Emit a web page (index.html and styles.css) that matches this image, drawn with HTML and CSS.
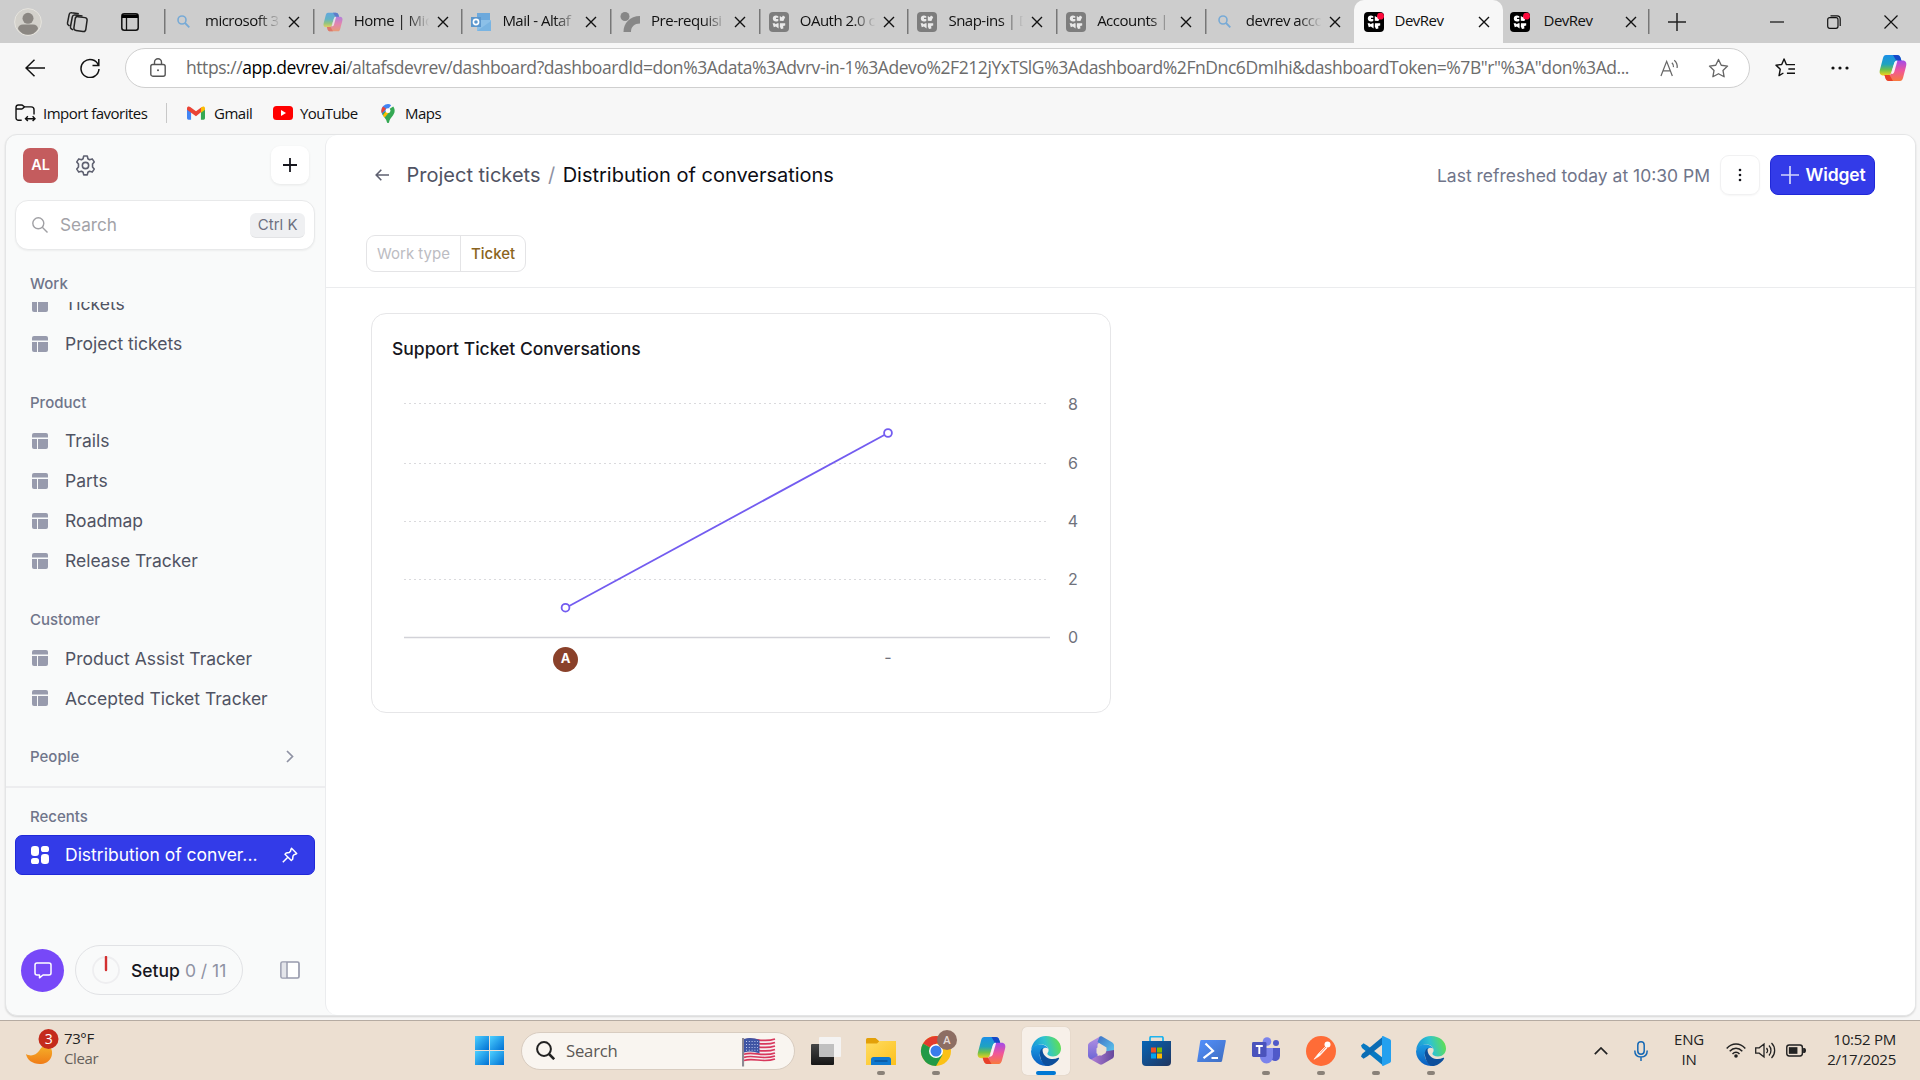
FILE: index.html
```html
<!DOCTYPE html>
<html lang="en">
<head>
<meta charset="utf-8">
<title>DevRev</title>
<link rel="stylesheet" href="styles.css">
</head>
<body>
<svg class="defs" width="0" height="0" aria-hidden="true">
  <defs>
    <linearGradient id="gCopA" x1="0" y1="0" x2="0" y2="1"><stop offset="0" stop-color="#1b8fe8"/><stop offset=".45" stop-color="#1fa3c0"/><stop offset=".72" stop-color="#6ec04a"/><stop offset="1" stop-color="#f5d21c"/></linearGradient>
    <linearGradient id="gCopB" x1="0" y1="0" x2="0" y2="1"><stop offset="0" stop-color="#a24bea"/><stop offset=".5" stop-color="#f0569a"/><stop offset="1" stop-color="#f87b3e"/></linearGradient>
    <linearGradient id="gEdgeA" x1="0" y1=".6" x2="1" y2=".4"><stop offset="0" stop-color="#1690d8"/><stop offset=".5" stop-color="#2fc3d0"/><stop offset="1" stop-color="#62e04e"/></linearGradient>
    <linearGradient id="gEdgeB" x1="0" y1="0" x2="0" y2="1"><stop offset="0" stop-color="#1b9de2"/><stop offset="1" stop-color="#0a5cc0"/></linearGradient>
    <linearGradient id="gWin" x1="0" y1="0" x2="1" y2="1"><stop offset="0" stop-color="#4cd0ff"/><stop offset="1" stop-color="#0070d4"/></linearGradient>
    <linearGradient id="gMoon" x1="0" y1="0" x2="0" y2="1"><stop offset="0" stop-color="#f5b52b"/><stop offset="1" stop-color="#f07c17"/></linearGradient>
    <linearGradient id="gFolder" x1="0" y1="0" x2="1" y2="1"><stop offset="0" stop-color="#ffdc63"/><stop offset="1" stop-color="#fcc11c"/></linearGradient>
    <linearGradient id="gStore" x1="0" y1="0" x2="1" y2="1"><stop offset="0" stop-color="#0765b6"/><stop offset="1" stop-color="#20355f"/></linearGradient>
    <linearGradient id="gPs" x1="0" y1="0" x2="1" y2="1"><stop offset="0" stop-color="#5391fe"/><stop offset="1" stop-color="#3e6dbf"/></linearGradient>
    <linearGradient id="gDark" x1="0" y1="0" x2="0" y2="1"><stop offset="0" stop-color="#454545"/><stop offset="1" stop-color="#161616"/></linearGradient>
    <linearGradient id="gOffA" x1="0" y1="0" x2="0" y2="1"><stop offset="0" stop-color="#b590e2"/><stop offset="1" stop-color="#6d66d6"/></linearGradient>
    <linearGradient id="gOffB" x1="0" y1="0" x2="1" y2="1"><stop offset="0" stop-color="#3f6fc4"/><stop offset="1" stop-color="#5fd0f2"/></linearGradient>
    <linearGradient id="gOffC" x1="0" y1="0" x2="1" y2="0"><stop offset="0" stop-color="#b07fd6"/><stop offset="1" stop-color="#66489c"/></linearGradient>
    <symbol id="close" viewBox="0 0 12 12"><path d="M1 1l10 10M11 1L1 11" stroke="#111" stroke-width="1.4" fill="none"/></symbol>
    <symbol id="lens" viewBox="0 0 13 13"><circle cx="5" cy="5" r="4" fill="none" stroke="#77aad6" stroke-width="1.6"/><path d="M8 8l4.3 4.3" stroke="#77aad6" stroke-width="1.8"/></symbol>
    <symbol id="copilot" viewBox="0 0 28 28">
      <path d="M7 1h11c2 0 3 1 3.600 3l.9 3h-4c-2 0-3 1-3.600 3l-2.700 8.500c-.6 2-1.600 3-3.600 3H4.500C1 21.500 0 19 1 15.500L4 4c.6-2 1.400-3 3-3z" fill="url(#gCopA)"/>
      <path d="M14 1h4c2 0 3 1 3.600 3l.9 3h-5z" fill="#1648c8"/>
      <path d="M21 27H10c-2 0-3-1-3.600-3L5.500 21h4c2 0 3-1 3.600-3l2.700-8.500c.6-2 1.600-3 3.600-3h4.100C27 6.500 28 9 27 12.500L24 24c-.6 2-1.400 3-3 3z" fill="url(#gCopB)"/>
      <path d="M14 27h-4c-2 0-3-1-3.600-3l-.9-3h5z" fill="#e8402a"/>
      <path d="M15.500 8.500c.5-1.500 1.500-2 3-2l-3.200 11.200c-.5 1.700-1.300 2.300-3 2.300z" fill="#fff" opacity=".9"/>
    </symbol>
    <symbol id="docs" viewBox="0 0 20 20"><rect width="20" height="20" rx="4" fill="#7d7d7d"/><g fill="#e9e9e9"><path d="M9.300 4.200C6.500 2.600 3.800 4 3.800 6.600s2.600 3.600 5.500 2.400V7H7V5.800h2.300z"/><path d="M10.800 4l2 1.300L14 3.500l2.200 1.600-1.800 4-3.600-.4z"/><path d="M3.600 11.200h2l1.200 1 1.400-1h1.400v5.200l-2.800-2-2 .8z"/><path d="M11 11.200h5.200v2.400l-2 .5.200 2.400L12 17l-1.200-2.600z"/></g></symbol>
    <symbol id="devrev" viewBox="0 0 20 20"><rect width="20" height="20" rx="4" fill="#000"/><g fill="#fff"><path d="M9.300 4.200C6.500 2.600 3.800 4 3.800 6.600s2.600 3.600 5.500 2.400V7H7V5.800h2.300z"/><path d="M10.800 4l2 1.300L14 3.500l2.200 1.600-1.800 4-3.600-.4z"/><path d="M3.600 11.200h2l1.200 1 1.400-1h1.400v5.200l-2.800-2-2 .8z"/><path d="M11 11.200h5.200v2.400l-2 .5.200 2.400L12 17l-1.200-2.600z"/></g><circle cx="16.500" cy="4.200" r="3.400" fill="#ff0a3c"/></symbol>
    <symbol id="layout" viewBox="0 0 16 16"><g fill="#989bad"><path d="M2 0h12a2 2 0 0 1 2 2v2.600H0V2a2 2 0 0 1 2-2z"/><path d="M0 6h5v10H2a2 2 0 0 1-2-2z"/><path d="M6 6h10v8a2 2 0 0 1-2 2H6z"/></g></symbol>
    <symbol id="edge" viewBox="0 0 30 30">
      <path d="M.2 14C1 6 7.200 0 15 0c8.500 0 15 5.500 15 12.400 0 4.800-3.600 8-8 8-3.600 0-5.600-1.300-5.600-2.700 0-1 1.200-1.300 1.200-3.600 0-3-3-5.600-7.200-5.600C5.400 8.500 1.300 11 .2 14z" fill="url(#gEdgeA)"/>
      <path d="M0 15.500C.7 10.500 5 8 10.400 8.500c3.500.3 6 2 6.900 4.300-1-1-2.500-1.400-4-.9-3.600 1.300-5 5-4.400 8.700.8 4.400 4.400 8 9.100 9A15 15 0 0 1 0 15.500z" fill="url(#gEdgeB)"/>
      <path d="M8.900 19c-.5-3.400.8-5.800 3-6.900-1 3.600.7 7.400 4 9.400 3.300 2 7.800 2 11.300.3.700-.3 1.200.3.800.9C25.300 27.300 20.500 30 16.500 30c-4-.7-7-5.500-7.600-11z" fill="#0d4f9c"/>
    </symbol>
  </defs>
</svg>

<header class="tabstrip">
  <div class="strip-tools">
    <svg class="i-profile" viewBox="0 0 28 28"><circle cx="14" cy="14" r="13.400" fill="#d3d1cb" stroke="#e6e4de"/><circle cx="14" cy="10.300" r="5.500" fill="#8b8782"/><path d="M4 21c0-3 2-4.500 5-4.500h10c3 0 5 1.500 5 4.500-2.500 4-6 5.800-10 5.800S6.500 25 4 21z" fill="#8b8782"/></svg>
    <svg class="i-ws" viewBox="0 0 22 22" fill="none" stroke="#222" stroke-width="1.500"><rect x="8.500" y="6" width="12" height="14" rx="2.500" transform="rotate(8 14 13)"/><path d="M7 19l-1.500-1c-1-.6-1.300-1.300-1-2.500L6.300 6c.3-1.600 1.300-2.200 2.700-2l7.500 1M3.500 15l-1-.8c-.9-.7-1.200-1.400-1-2.400l1.600-8c.3-1.600 1.200-2.400 2.700-2.100l7 1.100"/></svg>
    <svg class="i-vt" viewBox="0 0 18 18"><rect x=".8" y=".8" width="16.400" height="16.400" rx="2.500" fill="none" stroke="#111" stroke-width="1.500"/><path d="M1 1.500h16V5H1z" fill="#000"/><path d="M5.500 5v12" stroke="#111" stroke-width="1.300"/></svg>
  </div>
  <div class="tab"><svg class="fav lensfav"><use href="#lens"/></svg><span class="tt">microsoft 3</span><svg class="x"><use href="#close"/></svg></div>
  <div class="tab"><svg class="fav dim"><use href="#copilot"/></svg><span class="tt">Home | Mic</span><svg class="x"><use href="#close"/></svg></div>
  <div class="tab"><svg class="fav" viewBox="0 0 20 20"><path d="M6 1h13v9H6z" fill="#6da9dc"/><path d="M6 8h14v11H6z" fill="#8cc0e8"/><path d="M6 19l14-10v10z" fill="#79b4e2"/><rect y="5" width="10" height="10" fill="#5c97cd"/><circle cx="5" cy="10" r="2.600" fill="none" stroke="#fff" stroke-width="1.600"/></svg><span class="tt">Mail - Altaf</span><svg class="x"><use href="#close"/></svg></div>
  <div class="tab"><svg class="fav" viewBox="0 0 20 20" fill="#878787"><circle cx="5" cy="4.500" r="4.500"/><path d="M3.500 20C3.500 11 10 4 20 4v7.500C14.500 11.500 11 14.500 11 20z"/></svg><span class="tt">Pre-requisi</span><svg class="x"><use href="#close"/></svg></div>
  <div class="tab"><svg class="fav"><use href="#docs"/></svg><span class="tt">OAuth 2.0 c</span><svg class="x"><use href="#close"/></svg></div>
  <div class="tab"><svg class="fav"><use href="#docs"/></svg><span class="tt">Snap-ins | D</span><svg class="x"><use href="#close"/></svg></div>
  <div class="tab"><svg class="fav"><use href="#docs"/></svg><span class="tt">Accounts | </span><svg class="x"><use href="#close"/></svg></div>
  <div class="tab"><svg class="fav lensfav"><use href="#lens"/></svg><span class="tt">devrev acco</span><svg class="x"><use href="#close"/></svg></div>
  <div class="tab active"><svg class="fav"><use href="#devrev"/></svg><span class="tt full">DevRev</span><svg class="x"><use href="#close"/></svg></div>
  <div class="tab after"><svg class="fav"><use href="#devrev"/></svg><span class="tt full">DevRev</span><svg class="x"><use href="#close"/></svg></div>
  <div class="newtab"><svg width="18" height="18" viewBox="0 0 18 18"><path d="M9 0v18M0 9h18" stroke="#222" stroke-width="1.500"/></svg></div>
  <div class="winctl">
    <svg width="14" height="14" viewBox="0 0 14 14"><path d="M0 7h14" stroke="#111" stroke-width="1.200"/></svg>
    <svg width="14" height="14" viewBox="0 0 14 14" fill="none" stroke="#111" stroke-width="1.200"><rect x=".7" y="2.700" width="10.300" height="10.600" rx="2"/><path d="M3.500.8h6.500a3.200 3.200 0 0 1 3.200 3.200v7"/></svg>
    <svg width="14" height="14" viewBox="0 0 14 14"><path d="M.5.5l13 13M13.500.5l-13 13" stroke="#111" stroke-width="1.200"/></svg>
  </div>
</header>

<div class="navbar">
  <svg class="i-back" viewBox="0 0 20 18" fill="none" stroke="#111" stroke-width="1.500"><path d="M20 9H1M9.500.8L1 9l8.500 8.200"/></svg>
  <svg class="i-reload" viewBox="0 0 20 20" fill="none" stroke="#111" stroke-width="1.500"><path d="M18.500 7.500A9 9 0 1 0 19 11M18.800 1v6.500h-6.300"/></svg>
  <div class="address">
    <svg class="i-lock" viewBox="0 0 16 19" fill="none" stroke="#555" stroke-width="1.400"><rect x=".8" y="6.500" width="14.400" height="11.700" rx="2"/><path d="M4.500 6.500V4.200a3.500 3.500 0 0 1 7 0v2.300"/><circle cx="8" cy="12.300" r="1" fill="#555" stroke="none"/></svg>
    <div class="url">https://<b>app.devrev.ai</b>/altafsdevrev/dashboard?dashboardId=don%3Adata%3Advrv-in-1%3Adevo%2F212jYxTSlG%3Adashboard%2FnDnc6DmIhi&amp;dashboardToken=%7B"r"%3A"don%3Ad...</div>
    <svg class="i-read" viewBox="0 0 20 18" fill="none" stroke="#666" stroke-width="1.300"><path d="M1 17.500L7 2l6 15.500M3.200 12h7.600M12.500 3.500a5 5 0 0 1 1.700 4.500M15 .8a9 9 0 0 1 3 8.200"/></svg>
    <svg class="i-star" viewBox="0 0 22 21" fill="none" stroke="#666" stroke-width="1.400" stroke-linejoin="round"><path d="M11 1.500l2.900 6.100 6.600.9-4.800 4.600 1.200 6.600L11 16.500l-5.900 3.200 1.200-6.600L1.500 8.500l6.600-.9z"/></svg>
  </div>
  <svg class="i-favs" viewBox="0 0 22 20" fill="none" stroke="#111" stroke-width="1.500" stroke-linejoin="round"><path d="M13.500 7H12L9.500 1 7 6.800l-6 .7 4.500 4.300-1.300 6.700 4.600-2.700M13.500 7H21M14 11.500h7M12.500 16H21"/></svg>
  <svg class="i-dots" viewBox="0 0 18 4" fill="#111"><circle cx="2" cy="2" r="1.600"/><circle cx="9" cy="2" r="1.600"/><circle cx="16" cy="2" r="1.600"/></svg>
  <svg class="i-cop"><use href="#copilot"/></svg>
</div>

<div class="bookmarks">
  <svg class="i-import" viewBox="0 0 22 19" fill="none" stroke="#111" stroke-width="1.500"><path d="M7 17.200H3.500a2.500 2.500 0 0 1-2.500-2.500V3.500C1 1.800 2 1 3.300 1h3.500C8.500 1 9 3 10.500 3H17a3 3 0 0 1 3 3v5M1 5.200h6c1.700 0 2-2.200 3.500-2.200M11 15.500h10M13.500 13L11 15.500l2.500 2.500M18.500 13l2.500 2.500-2.500 2.500"/></svg>
  <span class="bm b1">Import favorites</span>
  <i class="bmsep"></i>
  <svg class="i-gmail" viewBox="0 0 19 14"><path d="M0 2v10.500A1.500 1.500 0 0 0 1.500 14H4.300V6z" fill="#4285f4"/><path d="M19 2v10.500a1.500 1.500 0 0 1-1.500 1.500h-2.800V6z" fill="#34a853"/><path d="M0 2.200C0 .2 2 -.4 3.400.7L9.500 5.200 15.600.7 14.700 6.200 9.500 10.300 0 3.500z" fill="#ea4335"/><path d="M14.700 1.400l.9-.7C17-.4 19 .2 19 2.200v1.500l-4.300 3z" fill="#fbbc04"/></svg>
  <span class="bm b2">Gmail</span>
  <svg class="i-yt" viewBox="0 0 20 14"><rect width="20" height="14" rx="3.500" fill="#f00"/><path d="M8 4l5 3-5 3z" fill="#fff"/></svg>
  <span class="bm b3">YouTube</span>
  <svg class="i-maps" viewBox="0 0 14 20"><path d="M7 0a7 7 0 0 0-7 7c0 2 .8 3.500 1.800 5l8.500-10.800A7 7 0 0 0 7 0z" fill="#4285f4"/><path d="M1.700 2.500A7 7 0 0 0 0 7c0 1 .2 2 .6 2.800L5 5z" fill="#ea4335"/><path d="M1 10l11.500-7.300c1 1.300 1.500 2.600 1.500 4.300 0 5-5 7-5.800 12-.3 1.400-2 1.400-2.400 0C5.300 16 3 14 1.600 11.800z" fill="#34a853"/><path d="M1.600 11.800L5 7.500l3.500 1-5 5.800C2.800 13.500 2 12.600 1.600 11.800z" fill="#fbbc04"/><circle cx="7" cy="7" r="2.600" fill="#fff"/></svg>
  <span class="bm b4">Maps</span>
</div>

<main class="app">
  <aside class="sidebar">
    <div class="side-top">
      <div class="avatar">AL</div>
      <svg class="i-gear" viewBox="0 0 20 20" fill="none" stroke="#5e6070" stroke-width="1.500" stroke-linejoin="round"><path d="M8.300 1h3.400l.6 2.600 1.500.9 2.600-.8 1.900 2.900-1.600 2v2.800l1.600 2-1.900 2.900-2.600-.8-1.500.9-.6 2.500H8.300l-.6-2.500-1.500-.9-2.600.8-1.900-2.900 1.600-2V8.600l-1.600-2 1.900-2.900 2.600.8 1.500-.9z"/><circle cx="10" cy="10" r="3"/></svg>
      <div class="addbtn"><svg width="14" height="14" viewBox="0 0 14 14"><path d="M7 0v14M0 7h14" stroke="#16161d" stroke-width="1.800"/></svg></div>
    </div>
    <div class="searchbox">
      <svg width="16" height="16" viewBox="0 0 16 16" fill="none" stroke="#a0a0a4" stroke-width="1.400"><circle cx="6.300" cy="6.300" r="5.500"/><path d="M10.300 10.300l5.200 5.200"/></svg>
      <span class="ph">Search</span><kbd>Ctrl K</kbd>
    </div>
    <div class="label first">Work</div>
    <div class="clip"><div class="row"><svg><use href="#layout"/></svg>Tickets</div></div>
    <div class="row"><svg><use href="#layout"/></svg>Project tickets</div>
    <div class="label">Product</div>
    <div class="row"><svg><use href="#layout"/></svg>Trails</div>
    <div class="row"><svg><use href="#layout"/></svg>Parts</div>
    <div class="row"><svg><use href="#layout"/></svg>Roadmap</div>
    <div class="row"><svg><use href="#layout"/></svg>Release Tracker</div>
    <div class="label">Customer</div>
    <div class="row"><svg><use href="#layout"/></svg>Product Assist Tracker</div>
    <div class="row"><svg><use href="#layout"/></svg>Accepted Ticket Tracker</div>
    <div class="label people">People<svg width="8" height="13" viewBox="0 0 8 13"><path d="M1 1l5.500 5.500L1 12" fill="none" stroke="#8f92a3" stroke-width="1.700"/></svg></div>
    <hr>
    <div class="label recents">Recents</div>
    <div class="row current">
      <svg viewBox="0 0 18 18" fill="#fff"><rect width="8" height="10" rx="3.200"/><rect x="10" width="8" height="6" rx="2.600"/><rect y="12" width="8" height="6" rx="2.600"/><rect x="10" y="8" width="8" height="10" rx="3.200"/></svg>
      <span>Distribution of conver...</span>
      <svg class="pin" viewBox="0 0 16 16" fill="none" stroke="#fff" stroke-width="1.500" stroke-linejoin="round"><path d="M9.500 1.300l5.200 5.200-1.400.8-1 .3-1.300 1.500-.4 3.200-1.300 1.200L3 7.200 4.200 6l3.100-.5 1.300-1.400.2-1.200zM5.800 10.200L.8 15.200"/></svg>
    </div>
    <div class="side-foot">
      <div class="chat"><svg width="18" height="17" viewBox="0 0 18 17" fill="none" stroke="#fff" stroke-width="1.500" stroke-linejoin="round"><path d="M3 1h12a2 2 0 0 1 2 2v8a2 2 0 0 1-2 2H9l-3.500 2.800V13H3a2 2 0 0 1-2-2V3a2 2 0 0 1 2-2z"/></svg></div>
      <div class="setup"><svg width="28" height="28" viewBox="0 0 28 28"><circle cx="14" cy="14" r="13" fill="none" stroke="#eeeef0" stroke-width="1.800"/><path d="M14 1v13" stroke="#d32f2f" stroke-width="2.400" stroke-linecap="round"/></svg><span>Setup</span><em>0 / 11</em></div>
      <svg class="i-panel" viewBox="0 0 20 18"><rect x="1" y="1" width="18" height="16" rx="1.500" fill="#fff" stroke="#989bad" stroke-width="1.700"/><path d="M1.700 1.700h5v14.600h-5z" fill="#e4e5ea"/><path d="M7 1v16" stroke="#989bad" stroke-width="1.500"/></svg>
    </div>
  </aside>

  <section class="content">
    <div class="head">
      <div class="crumbs">
        <svg width="14" height="12" viewBox="0 0 14 12" fill="none" stroke="#5e6070" stroke-width="1.600"><path d="M14 6H1.200M6.300.8L1.200 6l5.100 5.200"/></svg>
        <span class="parent">Project tickets</span><span class="slash">/</span><span class="here">Distribution of conversations</span>
        <span class="refreshed">Last refreshed today at 10:30 PM</span>
        <div class="more"><svg width="4" height="14" viewBox="0 0 4 14" fill="#16161d"><circle cx="2" cy="2" r="1.300"/><circle cx="2" cy="7" r="1.300"/><circle cx="2" cy="12" r="1.300"/></svg></div>
        <div class="widget"><svg width="18" height="18" viewBox="0 0 18 18"><path d="M9 0v18M0 9h18" stroke="#d4d6fb" stroke-width="1.700"/></svg><span>Widget</span></div>
      </div>
      <div class="filter"><span>Work type</span><b>Ticket</b></div>
    </div>
    <div class="card">
      <h2>Support Ticket Conversations</h2>
      <svg class="chart" width="700" height="300" viewBox="0 0 700 300">
        <g stroke="#dadadd" stroke-width="1.200" stroke-dasharray="2 3"><path d="M12 22.500h644M12 82.500h644M12 140.500h644M12 198.500h644"/></g>
        <path d="M12 256.500h646" stroke="#d2d2d8" stroke-width="1.600"/>
        <path d="M173.500 227L496 52" stroke="#735cf0" stroke-width="1.800"/>
        <circle cx="173.500" cy="226.700" r="3.900" fill="#fff" stroke="#735cf0" stroke-width="1.800"/>
        <circle cx="496" cy="52" r="3.900" fill="#fff" stroke="#735cf0" stroke-width="1.800"/>
        <g class="ax" text-anchor="middle"><text x="681" y="28.500">8</text><text x="681" y="87.500">6</text><text x="681" y="145.500">4</text><text x="681" y="203.500">2</text><text x="681" y="261.500">0</text><text x="496" y="282">-</text></g>
        <circle cx="173.500" cy="278.500" r="12.500" fill="#8a412a"/>
        <text class="badge" x="173.500" y="282" text-anchor="middle">A</text>
      </svg>
    </div>
  </section>
</main>

<footer class="taskbar">
  <div class="weather">
    <svg width="36" height="38" viewBox="0 0 36 38"><path d="M2 27c5 3 10 1 13-3 2-3 4-6 8-7 8 4 7 19-6 20C9 37.500 3 33 2 27z" fill="url(#gMoon)"/><circle cx="24.500" cy="12" r="10" fill="#c42b1c"/><text class="wb" x="24.500" y="17" text-anchor="middle">3</text></svg>
    <div><span>73°F</span><span class="clear">Clear</span></div>
  </div>
  <div class="apps">
    <svg class="start" viewBox="0 0 29 29" fill="url(#gWin)"><rect width="14" height="14"/><rect x="15" width="14" height="14"/><rect y="15" width="14" height="14"/><rect x="15" y="15" width="14" height="14"/></svg>
    <div class="tsearch">
      <svg width="19" height="19" viewBox="0 0 19 19" fill="none" stroke="#222"><circle cx="8" cy="8" r="6.900" stroke-width="2"/><path d="M12.500 12.500l5.700 5.700" stroke-width="2.600"/></svg>
      <span>Search</span>
      <svg class="flag" viewBox="0 0 34 30"><path d="M1 1v28.500" stroke="#8d8a93" stroke-width="2.200"/><path d="M2 2.500C12-1 20 6 33 1.500v21C20 27 12 20 2 24z" fill="#f6eef0"/><g fill="none" stroke="#d8385c" stroke-width="1.700"><path d="M2 3.200C12-.3 20 6.500 33 2M2 6.700C12 3.200 20 10 33 5.500M2 10.200C12 6.700 20 13.500 33 9M2 13.700C12 10.200 20 17 33 12.500M2 17.200C12 13.700 20 20.500 33 16M2 20.400C12 17 20 23.500 33 19M2 23.500C12 20 20 26.500 33 22"/></g><path d="M2 2c6-2 11-.5 15.500 1v13.300c-5-1.600-10-2.800-15.500-.8z" fill="#3f55a4"/><path d="M4 4.500h12M4 7.500h12M4 10.500h12M4 13.200h12" stroke="#c4cdec" stroke-width="1" stroke-dasharray="1 1.800"/></svg>
    </div>
    <div class="app-i"><svg width="30" height="28" viewBox="0 0 30 28"><rect y="7" width="23" height="21" rx="1" fill="url(#gDark)"/><rect x="8" width="22" height="20" rx="1" fill="#f4f4f4" opacity=".93"/><path d="M8 7h15v13H8z" fill="#aaa" opacity=".65"/></svg></div>
    <div class="app-i run"><svg width="30" height="28" viewBox="0 0 30 28"><path d="M0 2.500A1.500 1.500 0 0 1 1.500 1h8L13 4v4H0z" fill="#e3a008"/><path d="M0 6.500L11 6.400 13.500 4H30v24H0z" fill="url(#gFolder)"/><path d="M5 28v-5.500a2.500 2.500 0 0 1 2.500-2.500h15a2.500 2.500 0 0 1 2.500 2.500V28z" fill="#0f78cf"/><path d="M8.500 24h13" stroke="#0a4f94" stroke-width="1.300"/></svg></div>
    <div class="app-i run"><svg width="42" height="42" viewBox="-1 -2 42 42"><circle cx="20" cy="19" r="15" fill="#fbc116"/><path d="M20 19L7 11.500A15 15 0 0 1 33 11.500H20z" fill="#e33b2e"/><path d="M7 11.500a15 15 0 0 0 13 22.500l6.500-11.300L20 19z" fill="#229a47"/><circle cx="20" cy="19" r="7" fill="#fff"/><circle cx="20" cy="19" r="5.500" fill="#3a7cec"/><circle cx="31" cy="8" r="10" fill="#8d6e63"/><text class="cb" x="31" y="12" text-anchor="middle">A</text></svg></div>
    <div class="app-i"><svg width="29" height="29"><use href="#copilot"/></svg></div>
    <div class="app-i on"><svg width="30" height="30"><use href="#edge"/></svg></div>
    <div class="app-i"><svg width="26" height="29" viewBox="0 0 26 29"><path d="M0 9.500C0 8 .7 7 2 6.200L11.500.7 15 2.500 9.500 8.500v12L4.500 23.500C1.500 23.500 0 21.500 0 19.500z" fill="url(#gOffA)"/><path d="M11.500.7c1-.6 2-.6 3 0L24 6.200c1.300.8 2 1.800 2 3.300V20l-7.500-3.500v-5L9.500 6z" fill="url(#gOffB)"/><path d="M3 23.600l6.500-3.800h1.500l7.500-4.500L26 14v5.500c0 1.500-.7 2.600-2 3.300l-9.500 5.500c-1 .6-2 .6-3 0z" fill="url(#gOffC)"/><path d="M13 9.500l4.800 2.700v4.800L13 19.800l-4.500-2.500v-5z" fill="#eddfd0"/></svg></div>
    <div class="app-i"><svg width="29" height="30" viewBox="0 0 29 30"><path d="M8 6V2a1.300 1.300 0 0 1 1.300-1.300h10.400A1.300 1.300 0 0 1 21 2v4" fill="none" stroke="#1fb4ee" stroke-width="1.800"/><path d="M0 5h29v21a4 4 0 0 1-4 4H4a4 4 0 0 1-4-4z" fill="url(#gStore)"/><path d="M9 11.500h5v5H9z" fill="#f25022"/><path d="M15 11.500h5v5h-5z" fill="#7fba00"/><path d="M9 17.500h5v5H9z" fill="#00a4ef"/><path d="M15 17.500h5v5h-5z" fill="#ffb900"/></svg></div>
    <div class="app-i"><svg width="29" height="22" viewBox="0 0 29 22"><path d="M4.500 0h23.300c.8 0 1.200.5 1 1.300l-3.700 19.400c-.2.800-.8 1.300-1.500 1.300H1C.3 22 0 21.500.2 20.700L3.200 1.300C3.400.5 3.800 0 4.500 0z" fill="url(#gPs)"/><path d="M8.500 3.500l7.500 7.300-9.500 7.400M14.500 18h6.500" fill="none" stroke="#fff" stroke-width="2.200"/></svg></div>
    <div class="app-i run"><svg width="28" height="27" viewBox="0 0 28 27"><circle cx="24" cy="6" r="3" fill="#5059c9"/><path d="M18 11h10v8a5 5 0 0 1-8 4z" fill="#5059c9"/><circle cx="15" cy="4.500" r="4.300" fill="#7b83eb"/><path d="M8 11h13v9a6.500 6.500 0 0 1-13 0z" fill="#7b83eb"/><rect y="5" width="14.500" height="15" rx="1.400" fill="#4b53bc"/><path d="M3.800 9h7M7.300 9v8" stroke="#fff" stroke-width="1.900"/></svg></div>
    <div class="app-i run"><svg width="30" height="30" viewBox="0 0 30 30"><circle cx="15" cy="15" r="15" fill="#ff6c37"/><circle cx="21.500" cy="8.500" r="3" fill="#fff"/><path d="M19.500 10.500L12.500 17.500 8 23.300l5.500-3.300 7.500-8z" fill="#fff" stroke="#fff" stroke-width=".6"/><path d="M14 17.500l6-6.500" stroke="#ff6c37" stroke-width=".8"/></svg></div>
    <div class="app-i run"><svg width="30" height="30" viewBox="0 0 30 30"><path d="M0 9.500L2.500 7.300l4 2.500L22 22v7.500L1 12z" fill="#0879c2"/><path d="M0 20.500l2.500 2.200 4-2.500L22 8V.5L1 18z" fill="#0b6cb4"/><path d="M22 0l7 3.300c.6.300 1 1 1 1.600v20.200c0 .7-.4 1.300-1 1.600L22 30c-.8-.2-1-.7-1-1V1c0-.6.400-1 1-1z" fill="#24a0ef"/></svg></div>
    <div class="app-i run"><svg width="30" height="30"><use href="#edge"/></svg></div>
  </div>
  <div class="tray">
    <svg class="t-up" viewBox="0 0 14 8"><path d="M.8 7.200L7 1l6.200 6.200" fill="none" stroke="#222" stroke-width="1.700"/></svg>
    <svg class="t-mic" viewBox="0 0 14 20" fill="none" stroke="#1769b5" stroke-width="1.500"><rect x="3.800" y=".8" width="6.400" height="12.400" rx="3.200"/><path d="M.8 9.500c0 4 2.500 6.500 6.200 6.500s6.200-2.500 6.200-6.500M7 16v4"/></svg>
    <div class="lang"><span>ENG</span><span>IN</span></div>
    <svg class="t-wifi" viewBox="0 0 20 15" fill="none" stroke="#222" stroke-width="1.500"><path d="M.7 5.500C6-.4 14-.4 19.300 5.500M3.700 8.300c3.800-4 8.800-4 12.600 0M6.500 11c2.200-2.300 4.800-2.300 7 0"/><circle cx="10" cy="13" r="1.800" fill="#222" stroke="none"/></svg>
    <svg class="t-vol" viewBox="0 0 21 17" fill="none" stroke="#222" stroke-width="1.300"><path d="M.7 5.800h3.500L9 2v13l-4.800-3.800H.7zM11.500 6c1.300 1.500 1.300 3.500 0 5M14 3.500c2.600 2.800 2.600 7.200 0 10M16.500 1c4.200 4 4.200 11 0 15"/></svg>
    <svg class="t-bat" viewBox="0 0 21 13"><rect x=".8" y=".8" width="16.400" height="11.400" rx="2.500" fill="none" stroke="#222" stroke-width="1.500"/><rect x="3" y="3" width="9" height="7" fill="#222"/><path d="M18 4h1.300c1 0 1.700 1 1.700 2.500S20.300 9 19.300 9H18z" fill="#222"/></svg>
    <div class="clock"><span>10:52 PM</span><span>2/17/2025</span></div>
  </div>
</footer>
</body>
</html>
```
FILE: styles.css
```css
* { box-sizing: border-box; }
body { margin: 0; width: 1920px; height: 1080px; overflow: hidden; display: flex; flex-direction: column; background: #f7f7f7; font-family: Inter, sans-serif; color: #16161d; }
svg { display: block; flex: none; }
.defs { position: absolute; }
span { white-space: nowrap; }

.tabstrip, .navbar, .bookmarks, .taskbar { font-family: "Open Sans", sans-serif; flex: none; display: flex; align-items: center; }

.tabstrip { height: 43px; background: #cdcdcd; }
.strip-tools { width: 164px; display: flex; align-items: center; padding-left: 14px; }
.i-profile { width: 28px; height: 28px; }
.i-ws { width: 22px; height: 22px; margin-left: 24px; }
.i-vt { width: 18px; height: 18px; margin-left: 33px; }
.tab { width: 148.700px; height: 43px; flex: none; display: flex; align-items: center; padding-left: 10px; background: linear-gradient(#777, #777) 0 9px / 1.500px 25px no-repeat; }
.fav { width: 20px; height: 20px; }
.lensfav { width: 13px; height: 13px; margin: 0 4px 0 3px; }
.dim { opacity: .6; }
.tt { width: 77px; margin-left: 11px; padding-bottom: 3px; font-size: 15px; letter-spacing: -.5px; color: #111; -webkit-mask-image: linear-gradient(90deg, #000 68%, transparent 98%); mask-image: linear-gradient(90deg, #000 68%, transparent 98%); }
.tt.full { -webkit-mask-image: none; mask-image: none; }
.x { width: 12px; height: 12px; margin-left: 6px; }
.tab.active { width: 149px; background: #f7f7f7; border-radius: 10px 10px 0 0; }
.tab.after { width: 147px; background: linear-gradient(#777, #777) 100% 9px / 1.500px 25px no-repeat; padding-left: 7px; }
.tab.after .tt { margin-left: 14px; }
.tab.after .x { margin-left: 4px; }
.newtab { padding-left: 18px; }
.winctl { margin-left: auto; display: flex; gap: 43px; padding-right: 22px; }

.navbar { height: 49px; }
.i-back { width: 20px; height: 18px; margin-left: 25px; }
.i-reload { width: 20px; height: 20px; margin-left: 35px; }
.address { width: 1625px; height: 40px; margin-left: 25px; background: #fff; border: 1px solid #cfcfcf; border-radius: 20px; display: flex; align-items: center; }
.i-lock { width: 16px; height: 19px; margin-left: 24px; }
.url { margin-left: 20px; padding-bottom: 2px; width: 1446px; white-space: nowrap; font-size: 17.500px; letter-spacing: -.432px; color: #6c6c6c; }
.url b { font-weight: 400; color: #000; }
.i-read { width: 19px; height: 18px; margin-left: 28px; }
.i-star { width: 21px; height: 20px; margin-left: 29px; }
.i-favs { width: 21px; height: 19px; margin-left: 25px; }
.i-dots { width: 18px; height: 4px; margin-left: 35px; }
.i-cop { width: 28px; height: 28px; margin-left: 30px; }

.bookmarks { height: 42px; font-size: 15px; letter-spacing: -.5px; color: #111; }
.i-import { width: 21px; height: 18px; margin-left: 15px; }
.bm { margin-left: 7px; }
.b1 { width: 106px; }
.bmsep { width: 1px; height: 20px; margin-left: 17px; background: #c8c8c8; }
.i-gmail { width: 18px; height: 14px; margin-left: 20px; }
.b2 { width: 38px; margin-left: 9px; }
.i-yt { width: 20px; height: 14px; margin-left: 21px; }
.b3 { width: 58px; letter-spacing: -.6px; }
.i-maps { width: 14px; height: 19px; margin-left: 23px; }
.b4 { margin-left: 10px; }

.app { flex: none; width: 1911px; height: 882px; margin: 0 0 4px 5px; display: flex; border: 1px solid #e4e5e6; border-radius: 12px; overflow: hidden; background: #f9fafa; box-shadow: 0 1px 2px #0002; }
.sidebar { width: 319px; flex: none; display: flex; flex-direction: column; padding: 0; }
.side-top { display: flex; align-items: center; height: 60px; padding: 0 16px 0 17px; flex: none; }
.avatar { width: 35px; height: 35px; padding-bottom: 1px; border-radius: 7px; background: #c45c5e; color: #fff; font-size: 14.500px; font-weight: 600; display: grid; place-items: center; }
.i-gear { width: 21px; height: 21px; margin-left: 17px; }
.addbtn { width: 38px; height: 38px; margin-left: auto; border-radius: 9px; background: #fff; display: grid; place-items: center; box-shadow: 0 1px 3px #00000014; }
.searchbox { height: 50px; flex: none; margin: 5px 10px 0 9px; padding: 0 9px 0 16px; background: #fff; border: 1px solid #e8e9ea; border-radius: 13px; display: flex; align-items: center; box-shadow: 0 1px 2px #0000000d; }
.ph { margin-left: 12px; padding-bottom: 1px; font-size: 17.200px; color: #a3a3a8; }
kbd { margin-left: auto; height: 25px; padding: 0 7.500px; border-radius: 6px; background: #eff0f2; border-bottom: 1px solid #e2e3e5; font: 15px/24px Inter, sans-serif; color: #6d7080; }
.label { height: 37px; margin-top: 20.300px; padding: 0 24px; flex: none; display: flex; align-items: center; font-size: 15px; font-weight: 500; color: #70758a; }
.label.first { height: 38px; margin-top: 14px; }
.clip { height: 21.500px; flex: none; overflow: hidden; display: flex; align-items: flex-end; }
.row { height: 40px; flex: none; padding: 0 9px 0 26px; display: flex; align-items: center; gap: 17px; font-size: 17.500px; color: #505363; }
.row svg { width: 16px; height: 16px; }
.people { justify-content: space-between; padding-right: 31px; }
hr { width: 100%; height: 2px; margin: 10.500px 0 0; border: 0; background: #ededef; flex: none; }
.label.recents { margin-top: 10px; }
.row.current { margin: 0 10px 0 9px; padding: 0 16px 0 15px; gap: 16px; background: #333be8; border: 1px solid #2028d8; border-radius: 7px; color: #fff; }
.row.current svg { width: 18px; height: 18px; }
.row.current .pin { width: 16px; height: 16px; margin-left: auto; }
.side-foot { margin: auto 0 20px; height: 50px; display: flex; align-items: center; padding-left: 15px; }
.chat { width: 43px; height: 43px; border-radius: 50%; background: #7748f8; display: grid; place-items: center; }
.setup { width: 168px; height: 50px; margin-left: 11px; padding-left: 16px; border: 1px solid #e1e2e5; border-radius: 25px; display: flex; align-items: center; font-size: 17.500px; font-weight: 500; }
.setup span { margin-left: 11px; }
.setup em { margin-left: 5px; font-style: normal; font-weight: 400; color: #8f92a3; }
.i-panel { width: 20px; height: 18px; margin-left: 37px; }

.content { flex: 1; background: #fff; border-left: 1px solid #ebecee; border-radius: 12px 0 0 12px; }
.head { height: 153px; border-bottom: 1px solid #ebecee; }
.crumbs { height: 80px; padding: 0 40px 0 48.500px; display: flex; align-items: center; font-size: 20px; }
.parent { margin-left: 18px; color: #505363; }
.slash { margin: 0 7.500px 0 7.500px; color: #8f92a3; }
.here { color: #0d0d14; letter-spacing: -.01px; }
.refreshed { margin-left: auto; font-size: 17.500px; color: #70758a; }
.more { width: 40px; height: 40px; margin-left: 10px; border: 1px solid #f1f1f2; border-radius: 9px; display: grid; place-items: center; box-shadow: 0 1px 2px #0000000a; }
.widget { width: 105px; height: 40px; margin-left: 10px; border: 1px solid #2028d8; border-radius: 8px; background: #333be8; color: #fff; font-size: 17.500px; font-weight: 600; display: flex; align-items: center; padding-left: 10px; gap: 6.500px; }
.widget span { padding-bottom: 1px; letter-spacing: -.15px; }
.filter { width: 160px; height: 37px; margin: 20px 0 0 40px; display: flex; align-items: center; border: 1px solid #e4e4e6; border-radius: 9px; font-size: 15px; line-height: 35px; }
.filter span { padding-left: 10px; width: 94px; color: #bcbcc2; border-right: 1px solid #e4e4e6; }
.filter b { padding-left: 10px; font-weight: 500; color: #8a6420; }
.card { width: 740px; height: 400px; margin: 25px 0 0 45px; padding: 0 20px; border: 1px solid #e6e6e8; border-radius: 15px; }
.card h2 { margin: 0; padding-top: 23px; height: 67px; font-size: 17.500px; line-height: 24px; font-weight: 500; }
.chart text { font-family: Inter, sans-serif; }
.ax { font-size: 16px; fill: #70727c; }
.chart .badge { font-size: 13px; font-weight: 700; fill: #fff; }

.taskbar { height: 60px; background: #ecdfd1; border-top: 1px solid #b5aba2; color: #222; }
.weather { width: 475px; display: flex; align-items: center; padding-left: 24px; font-size: 15px; letter-spacing: -.4px; }
.weather svg { margin-bottom: 10px; }
.weather div { display: flex; flex-direction: column; line-height: 20px; margin-left: 4px; padding-bottom: 5px; }
.clear { color: #655f5a; }
.wb { font-size: 14px; fill: #fff; }
.cb { font: 600 11px "Open Sans", sans-serif; fill: #e6dcd8; }
.apps { display: flex; align-items: center; flex: none; }
.start { width: 29px; height: 29px; }
.tsearch { width: 274px; height: 38px; margin: 0 3.500px 0 17px; padding-left: 14px; border: 1px solid #d8ccc0; border-radius: 19px; background: #f9f5f0; display: flex; align-items: center; font-size: 16.700px; letter-spacing: -.2px; color: #5b5855; }
.tsearch span { margin-left: 11px; padding-bottom: 1px; }
.flag { width: 34px; height: 30px; margin: 2px 18px 0 auto; }
.app-i { width: 55px; height: 48px; display: grid; place-items: center; position: relative; }
.app-i.run::after, .app-i.on::after { content: ""; position: absolute; bottom: 0; left: 23.500px; width: 8px; height: 4px; border-radius: 2px; background: #8a8178; }
.app-i.on { width: 48px; margin: 0 3.500px; background: #f7f0e9; border-radius: 5px; box-shadow: 0 0 1px #0003; }
.app-i.on::after { left: 14px; width: 20px; background: #0078d4; }
.tray { margin-left: auto; display: flex; align-items: center; font-size: 15px; letter-spacing: -.25px; padding-right: 24px; }
.tray div { display: flex; flex-direction: column; line-height: 20px; padding-bottom: 4px; }
.t-up { width: 14px; height: 8px; }
.t-mic { width: 14px; height: 20px; margin-left: 26px; }
.lang { width: 36px; margin-left: 23px; align-items: center; }
.t-wifi { width: 20px; height: 15px; margin-left: 19px; }
.t-vol { width: 21px; height: 17px; margin-left: 9px; }
.t-bat { width: 20px; height: 13px; margin-left: 10px; }
.clock { width: 90px; align-items: flex-end; }
```
